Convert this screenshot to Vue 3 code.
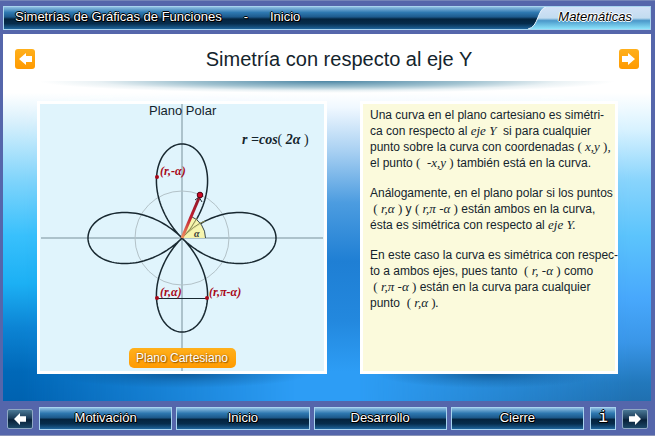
<script setup>
const cx = 142
const cy = 134
const size = 94

const rose = Array.from({ length: 361 }, (_, deg) => {
  const t = (deg * Math.PI) / 180
  const r = size * Math.cos(2 * t)
  return `${deg ? 'L' : 'M'}${(cx + r * Math.cos(t)).toFixed(2)} ${(cy - r * Math.sin(t)).toFixed(2)}`
}).join('') + 'Z'

const sections = ['Motivación', 'Inicio', 'Desarrollo', 'Cierre']
</script>

<template>
  <div class="app">
    <header class="bar">
      <div class="crumbs">
        <span>Simetrías de Gráficas de Funciones</span>
        <span>-</span>
        <span>Inicio</span>
      </div>
      <div class="subject">
        <svg class="subject-shape" viewBox="0 0 122 22" preserveAspectRatio="none" aria-hidden="true">
          <defs>
            <linearGradient id="tab" x1="0" y1="0" x2="0" y2="1">
              <stop offset="0" stop-color="#d3e2f6" />
              <stop offset=".5" stop-color="#c2dcf0" />
              <stop offset=".62" stop-color="#4a98ca" />
              <stop offset="1" stop-color="#8ce4fb" />
            </linearGradient>
          </defs>
          <path d="M0 22C11 20 9 2 18 0H122V22Z" fill="url(#tab)" />
          <path d="M0 22C11 20 9 2 18 0" fill="none" stroke="#e8f6ff" />
        </svg>
        <span>Matemáticas</span>
      </div>
    </header>

    <main class="stage">
      <div class="heading">
        <button class="step" aria-label="Anterior">
          <svg viewBox="0 0 20 20"><path d="M4 10L11 4V7H17V13H11V16Z" fill="#fff" /></svg>
        </button>
        <h1>Simetría con respecto al eje Y</h1>
        <button class="step" aria-label="Siguiente">
          <svg viewBox="0 0 20 20"><path d="M16 10L9 4V7H3V13H9V16Z" fill="#fff" /></svg>
        </button>
      </div>
      <div class="rule"></div>

      <div class="cards">
        <section class="card plot">
          <svg viewBox="0 0 284 267" class="graph">
            <defs>
              <linearGradient id="ray" gradientUnits="userSpaceOnUse" x1="142" y1="134" x2="159" y2="94">
                <stop offset="0" stop-color="#f09060" />
                <stop offset=".5" stop-color="#c02030" />
                <stop offset="1" stop-color="#901828" />
              </linearGradient>
            </defs>
            <path d="M1 134H283M142 0V267" stroke="#78909a" fill="none" />
            <circle cx="142" cy="134" r="47" fill="none" stroke="#b3c2c8" />
            <path :d="rose" fill="none" stroke="#182830" stroke-width="1.5" />
            <path d="M142 134H165.500A23.500 23.500 0 0 0 151 112.300Z" fill="#f8f5a5" fill-opacity=".9" />
            <path d="M165.500 134A23.500 23.500 0 0 0 151 112.300" fill="none" stroke="#384850" />
            <path d="M142 134Q154 121 165 117M142 134Q151 126 157 114" fill="none" stroke="#8c8c55" />
            <path d="M142 134L159 94" stroke="url(#ray)" stroke-width="3" />
            <path d="M155 96L159 93L162 98" fill="none" stroke="#202830" />
            <circle cx="160" cy="91" r="2.800" fill="#d00824" stroke="#500010" />
            <path d="M117 194.500H167" stroke="#182830" />
            <circle cx="117" cy="73" r="2" fill="#a80818" />
            <circle cx="117" cy="194" r="2" fill="#a80818" />
            <circle cx="167" cy="194" r="2" fill="#a80818" />
            <text x="109" y="11" class="label">Plano Polar</text>
            <text x="202" y="40" class="formula">r =cos<tspan class="upright">(</tspan> 2α <tspan class="upright">)</tspan></text>
            <text x="120" y="71" class="point">(r,-α)</text>
            <text x="120" y="192" class="point">(r,α)</text>
            <text x="169" y="192" class="point">(r,π-α)</text>
            <text x="154" y="133" class="angle">α</text>
          </svg>
          <button class="toggle">Plano Cartesiano</button>
        </section>

        <section class="card prose">
          <p>
            Una curva en el plano cartesiano es simétri-<br />
            ca con respecto al <i>eje Y</i>&nbsp; si para cualquier<br />
            punto sobre la curva con coordenadas <i><b>(</b> x,y <b>)</b>,</i><br />
            el punto <i><b>(</b>&nbsp; -x,y <b>)</b></i> también está en la curva.
          </p>
          <p>
            Análogamente, en el plano polar si los puntos<br />
            &nbsp;<i><b>(</b> r,α <b>)</b></i> y <i><b>(</b> r,π -α <b>)</b></i> están ambos en la curva,<br />
            ésta es simétrica con respecto al <i>eje Y.</i>
          </p>
          <p>
            En este caso la curva es simétrica con respec-<br />
            to a ambos ejes, pues tanto &nbsp;<i><b>(</b> r, -α <b>)</b></i> como<br />
            &nbsp;<i><b>(</b> r,π -α <b>)</b></i> están en la curva para cualquier<br />
            punto &nbsp;<i><b>(</b> r,α <b>)</b>.</i>
          </p>
        </section>
      </div>
    </main>

    <nav class="nav">
      <button class="arrow" aria-label="Atrás">
        <svg viewBox="0 0 24 18"><path d="M6 9L12 3V6.300H18V11.700H12V15Z" fill="#fff" /></svg>
      </button>
      <div class="tabs">
        <button v-for="name in sections" :key="name" class="glossy">{{ name }}</button>
      </div>
      <button class="glossy info" aria-label="Información">i</button>
      <button class="arrow" aria-label="Adelante">
        <svg viewBox="0 0 24 18"><path d="M18 9L12 3V6.300H6V11.700H12V15Z" fill="#fff" /></svg>
      </button>
    </nav>
  </div>
</template>

<style>
body {
  background: #5566ab;
}
</style>

<style scoped>
* {
  box-sizing: border-box;
}
.app {
  display: flex;
  flex-direction: column;
  min-height: 100vh;
  padding: 5px 4px 5px 3px;
  border-top: 1px solid #7585b8;
  border-bottom: 1px solid #8a94b8;
  background: #5566ab;
  font-family: "Liberation Sans", Arial, sans-serif;
  color: #14242c;
}
button {
  padding: 0;
  border: 0;
  font-family: inherit;
  cursor: pointer;
}
button svg {
  display: block;
  width: 100%;
  height: 100%;
}
.bar,
.glossy {
  border: 1px solid #a8d4ee;
  background: linear-gradient(#8fbfe2, #2e78b0 25%, #1d5a8c 45%, #04243f 55%, #062c4c 75%, #1f659c);
  color: #fff;
  text-shadow: 1px 0 #000, -1px 0 #000, 0 1px #000, 0 -1px #000, 1px 1px #000;
}
.bar {
  display: flex;
  justify-content: space-between;
  align-items: stretch;
  height: 24px;
  font-size: 13px;
  line-height: 20px;
}
.crumbs {
  display: flex;
  gap: 22px;
  padding-left: 11px;
}
.subject {
  display: grid;
  width: 122px;
  color: #000;
  font-style: italic;
  text-shadow: 1px 0 #fff, -1px 0 #fff, 0 1px #fff, 0 -1px #fff;
}
.subject > * {
  grid-area: 1 / 1;
}
.subject span {
  justify-self: end;
  padding-right: 18px;
}
.subject-shape {
  width: 100%;
  height: 22px;
}
.stage {
  position: relative;
  isolation: isolate;
  flex: 1;
  margin-top: 4px;
  padding-bottom: 27px;
  background: linear-gradient(#fff 16%, #f0f8ff 20%, #a8d0f2 32%, #4c9ce0 46%, #1f7fd4 62%, #2388de 78%, #2d9df5 92%);
}
.stage::before,
.stage::after {
  content: "";
  position: absolute;
  inset: 0;
  z-index: -1;
}
.stage::before {
  background: linear-gradient(#fff 16%, #d8f0fc 24%, #7fd4fb 40%, #38c0fc 55%, #1cb0f4 68%, #0c84d4 80%, #0068b8 92%, #0062b0);
  mask-image: linear-gradient(90deg, #000 3%, transparent 45%);
}
.stage::after {
  background: linear-gradient(#fff 16%, #d8f2ff 26%, #88d4fc 40%, #5cc4fc 55%, #48a8fc 72%, #3a96e8 84%, #2278bc 95%, #2070b0);
  mask-image: linear-gradient(270deg, #000 3%, transparent 45%);
}
.heading {
  display: flex;
  align-items: center;
  justify-content: space-between;
  height: 47px;
  padding: 2px 12px 0;
}
h1 {
  margin: 0 0 0 24px;
  font-size: 20px;
  font-weight: normal;
  line-height: 24px;
}
.step {
  width: 20px;
  height: 20px;
  border-radius: 3px;
  background: linear-gradient(#ffb01c, #ff9a00);
}
.rule {
  height: 12px;
  margin: 0 36px 8px;
  background: radial-gradient(ellipse 50% 100% at 50% 0, #4c86a4, #78a8bcb0 50%, #a8c8d440 80%, #fff0);
}
.cards {
  display: grid;
  grid-template-columns: minmax(0, 290fr) minmax(0, 258fr);
  gap: 33px;
  padding: 0 33px 0 34px;
}
.card {
  position: relative;
  border: 3px solid #fff;
}
.card::after {
  content: "";
  position: absolute;
  top: calc(100% + 3px);
  left: 5%;
  right: 5%;
  height: 14px;
  background: radial-gradient(ellipse 50% 100% at 50% 0, #0a4a80b0, #0a4a8040 55%, #0a4a8000);
}
.plot {
  display: grid;
  background: #e0f4fc;
}
.plot > * {
  grid-area: 1 / 1;
}
.graph {
  display: block;
  width: 100%;
}
.label {
  font-size: 13px;
  fill: #14242c;
}
.formula,
.point,
.angle {
  font-family: "Liberation Serif", "Times New Roman", serif;
  font-style: italic;
  font-weight: bold;
}
.formula {
  font-size: 14px;
  fill: #14242c;
}
.upright {
  font-style: normal;
  font-weight: normal;
}
.point {
  font-size: 12px;
  fill: #a80818;
}
.angle {
  font-size: 10px;
  fill: #384038;
}
.toggle {
  place-self: end center;
  width: 107px;
  height: 20px;
  margin-bottom: 3px;
  border-radius: 5px;
  background: linear-gradient(#ffb01c, #ff9a00);
  color: #fff;
  font-size: 12px;
  text-shadow: 0 0 2px #a06000, 1px 1px 1px #a06000;
}
.prose {
  padding: 3px 0 0 7px;
  background: #fbfadc;
  font-size: 12px;
  line-height: 16px;
  white-space: nowrap;
}
.prose p {
  margin: 0 0 14px;
}
.prose i {
  font-family: "Liberation Serif", "Times New Roman", serif;
  font-size: 13px;
  line-height: 1px;
}
.prose b {
  font-style: normal;
  font-weight: normal;
}
.nav {
  display: flex;
  align-items: center;
  gap: 6px;
  padding: 6px 3px 0 4px;
}
.tabs {
  display: grid;
  grid-template-columns: repeat(4, 1fr);
  flex: 1;
  gap: 4px;
}
.glossy {
  height: 23px;
  padding-bottom: 2px;
  font-size: 13px;
  line-height: 18px;
}
.info {
  width: 26px;
  font-family: "Liberation Mono", monospace;
  font-size: 16px;
}
.arrow {
  width: 26px;
  height: 20px;
  border: 1px solid #8fa8c4;
  border-radius: 2px;
  background: linear-gradient(#4a7896, #1c3c58 45%, #082038 55%, #1c4868);
}
</style>
